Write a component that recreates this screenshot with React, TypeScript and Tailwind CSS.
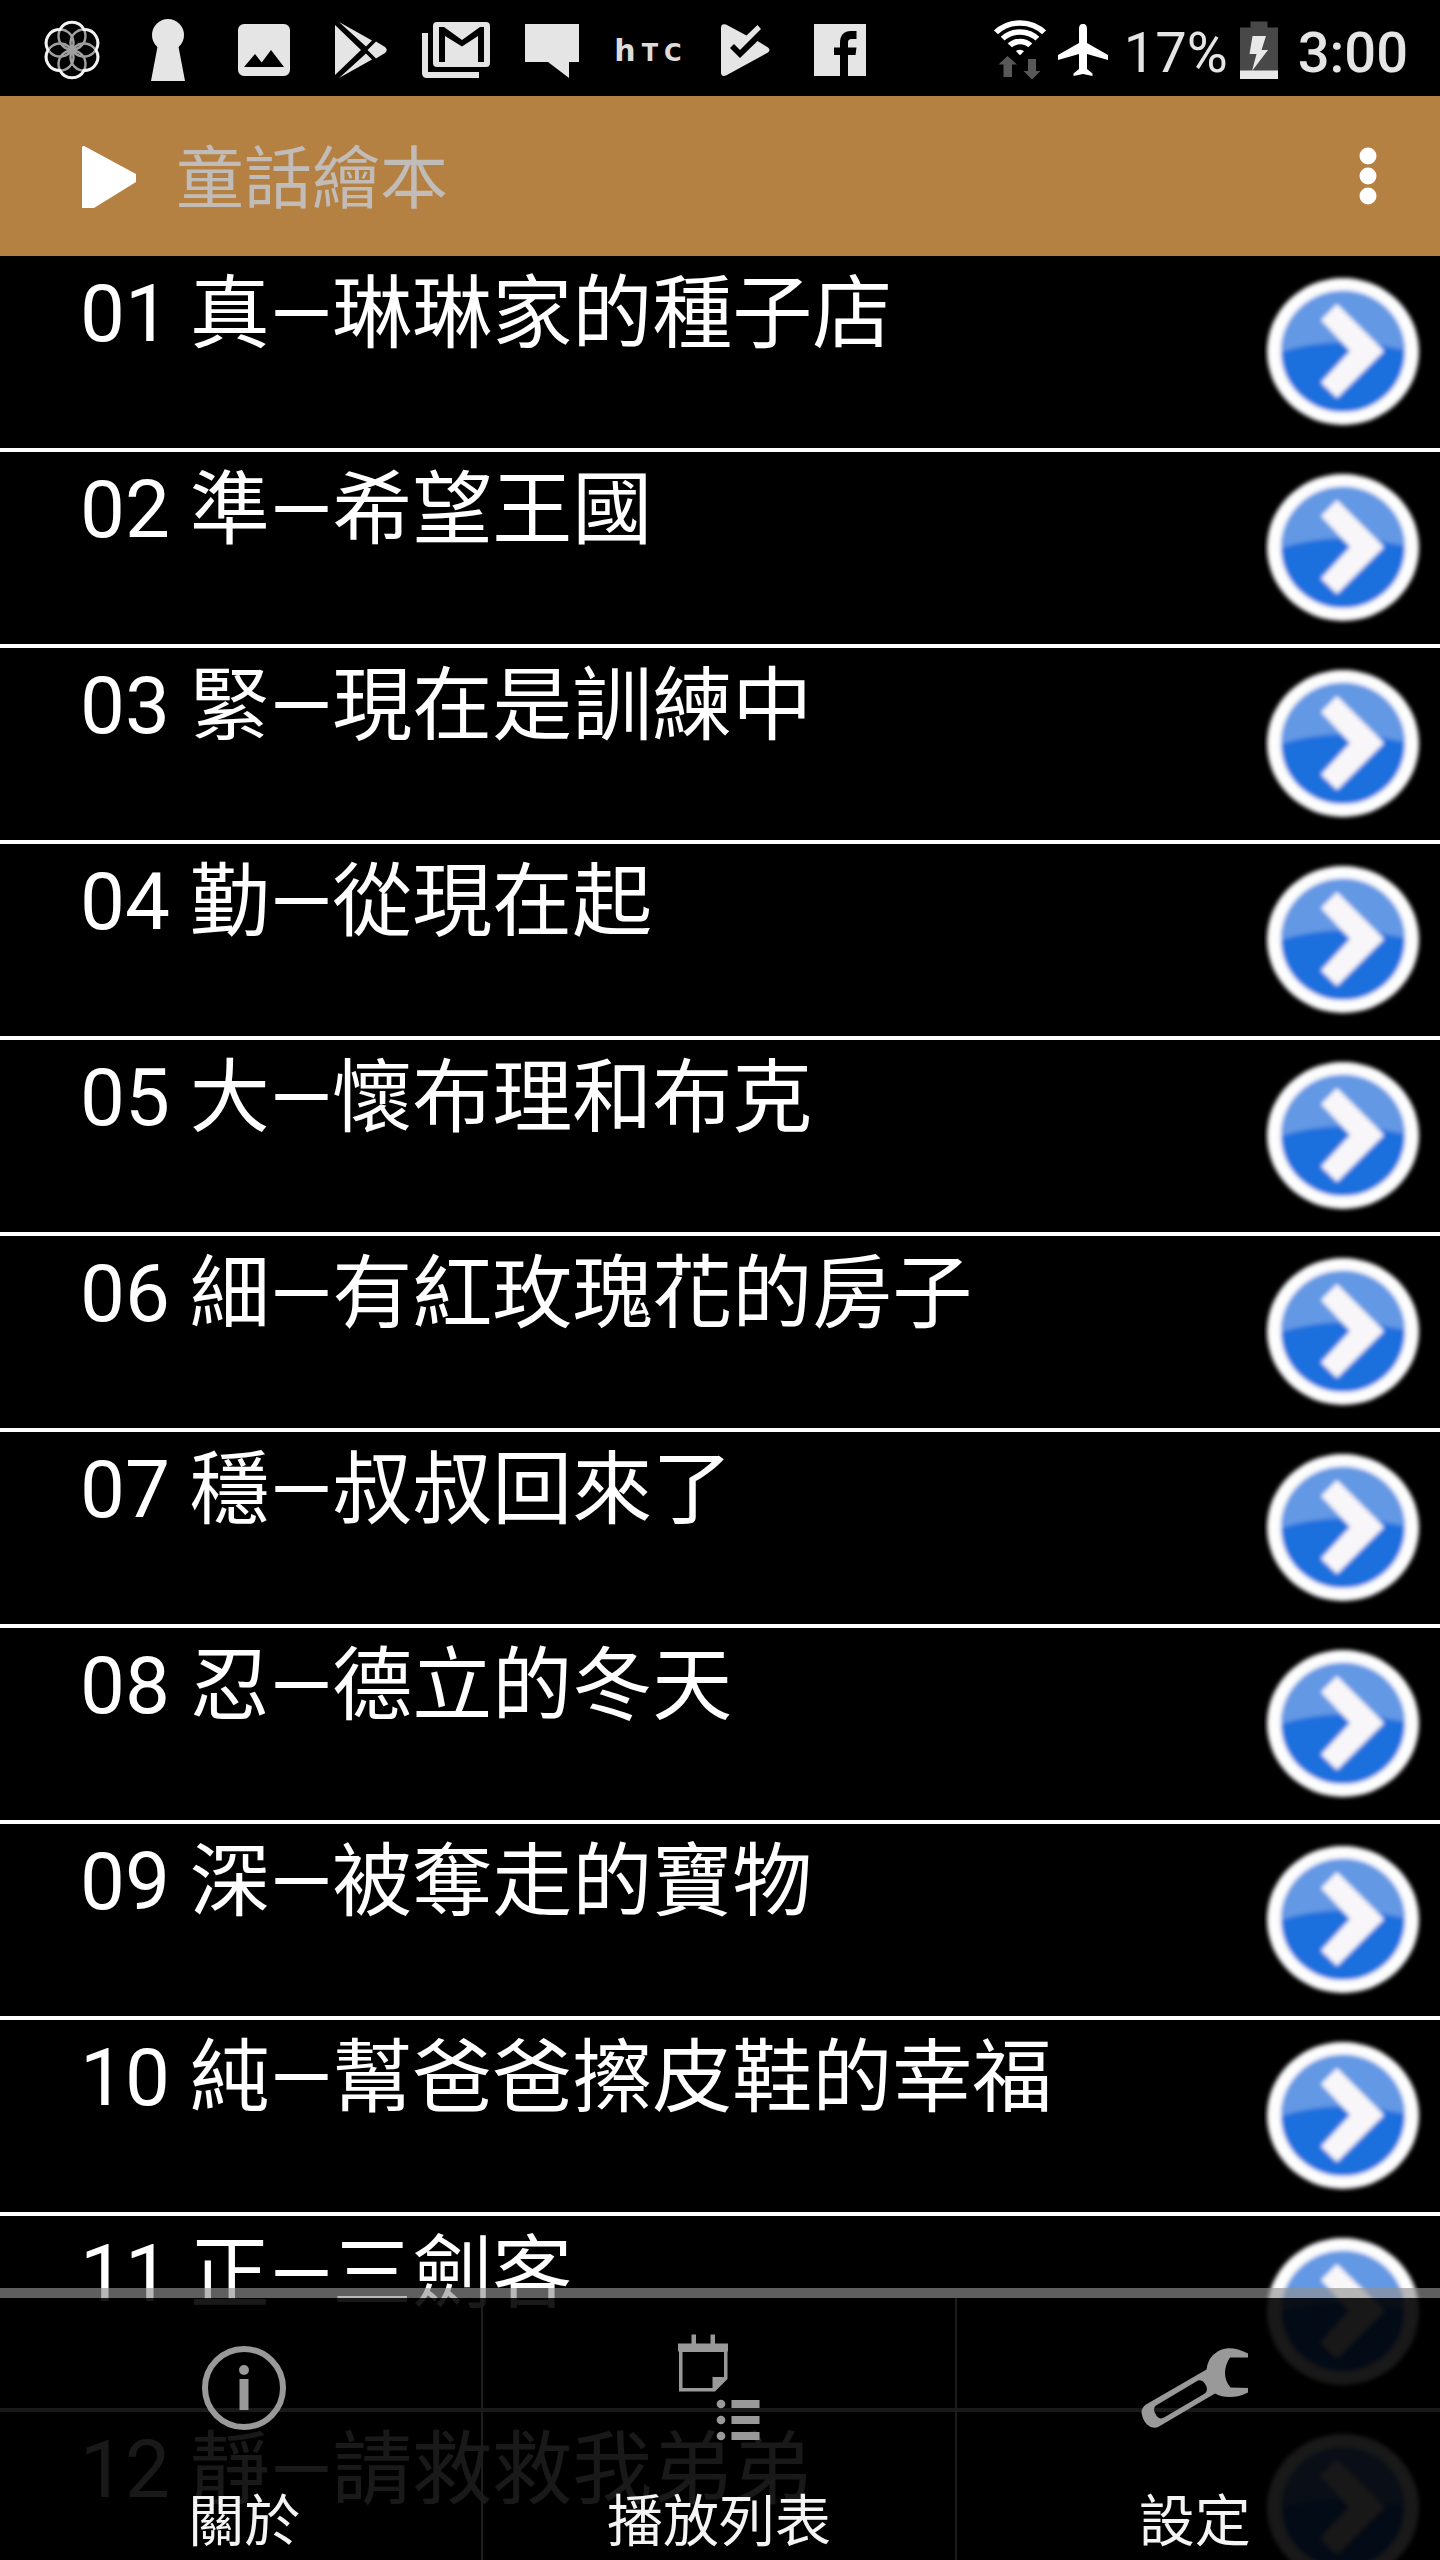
import type { ReactNode } from "react";

const stories = [
  "01 真—琳琳家的種子店",
  "02 準—希望王國",
  "03 緊—現在是訓練中",
  "04 勤—從現在起",
  "05 大—懷布理和布克",
  "06 細—有紅玫瑰花的房子",
  "07 穩—叔叔回來了",
  "08 忍—德立的冬天",
  "09 深—被奪走的寶物",
  "10 純—幫爸爸擦皮鞋的幸福",
  "11 正—三劍客",
  "12 靜—請救救我弟弟",
];

const StatusIcon = ({ children }: { children: ReactNode }) => (
  <svg className="size-24 shrink-0" viewBox="0 0 96 96" fill="#e5e5e5" aria-hidden="true">
    {children}
  </svg>
);

const petals = [
  [48, 36],
  [60, 43],
  [60, 57],
  [48, 64],
  [36, 57],
  [36, 43],
];

const StatusBar = () => (
  <div className="flex h-24 shrink-0 items-center justify-between pl-6 pr-8">
    <div className="flex items-center">
      <StatusIcon>
        <g fill="none" stroke="#a0a0a0" strokeWidth="2.4">
          {petals.map(([x, y]) => (
            <circle key={`${x}-${y}`} cx={x} cy={y} r="13.5" />
          ))}
        </g>
        <path
          d="M72 50A13.5 13.5 0 0 0 60 29.5A13.5 13.5 0 0 0 36 29.5A13.5 13.5 0 0 0 24 50A13.5 13.5 0 0 0 36 70.5A13.5 13.5 0 0 0 60 70.5A13.5 13.5 0 0 0 72 50Z"
          fill="none"
          stroke="#f4f4f4"
          strokeWidth="2.8"
        />
      </StatusIcon>
      <StatusIcon>
        <circle cx="48" cy="35" r="16" />
        <path d="M38 44h20l7 37H31z" />
      </StatusIcon>
      <StatusIcon>
        <path
          fillRule="evenodd"
          d="M28 24h40a6 6 0 0 1 6 6v40a6 6 0 0 1-6 6H28a6 6 0 0 1-6-6V30a6 6 0 0 1 6-6zM28 67h40L55 50l-9.300 12.500L39 54z"
        />
      </StatusIcon>
      <StatusIcon>
        <path d="M23 25L49 50L23 75zM27 22L60 40.500L54 46.500zM27 78L60 59.500L54 53.500zM64 41.500L73 47Q76.500 50 73 53L64 58.500L55.500 50z" />
      </StatusIcon>
      <StatusIcon>
        <path d="M14 33h6v39h51v6H19q-5 0-5-5z" />
        <path
          fillRule="evenodd"
          d="M29 22h49q4 0 4 4v37q0 4-4 4H29q-4 0-4-4V26q0-4 4-4zM31 27v35h6V36l17 10.500L70 36v26h6V27h-4L54 40L36 27z"
        />
      </StatusIcon>
      <StatusIcon>
        <path d="M21 24h54v38H65v16L44 62H21z" />
      </StatusIcon>
      <div className="flex w-24 items-baseline justify-center gap-1.5 pt-2 font-['DejaVu_Sans',sans-serif] font-bold text-[#dcdcdc]">
        <span className="text-[30px] leading-8">h</span>
        <span className="text-2xl leading-8">T</span>
        <span className="text-2xl leading-8">C</span>
      </div>
      <StatusIcon>
        <path d="M25 28q0-5 5-3.500L50.500 35.500L61.500 25L65 29L44 50L38 44L34 48L44 58L61.500 41L72 47.500q3 2.500 0 5L30 75.500q-5 1.500-5-3z" />
      </StatusIcon>
      <StatusIcon>
        <path
          fillRule="evenodd"
          d="M22 24h52v52H56V55h7.500l1-7.500H56V43c0-3 1-4 3.500-4h5v-8H59c-7 0-11 4-11 12v4.500h-6V55h6v21H22z"
        />
      </StatusIcon>
    </div>
    <div className="flex items-center text-[56px] leading-[56px] text-[#e5e5e5]">
      <svg className="mr-2 h-24 w-[60px]" viewBox="0 0 60 96" aria-label="Wi-Fi">
        <clipPath id="wifi">
          <path d="M30 55L-3 24V0H63V24z" />
        </clipPath>
        <g clipPath="url(#wifi)" fill="none" stroke="#fff" strokeWidth="5.5">
          <circle cx="30" cy="59" r="36" />
          <circle cx="30" cy="58" r="26" />
          <circle cx="30" cy="57" r="15.500" />
          <circle cx="30" cy="56" r="3.500" fill="#fff" />
        </g>
        <path
          fill="#585858"
          d="M17.500 56L27 64.500H22V77H13.500V64.500H8.500zM38 59h8v12h4.500L42 79.500L33.500 71H38z"
        />
      </svg>
      <svg className="mr-4 h-24 w-[50px]" viewBox="0 0 50 96" fill="#fff" aria-label="Airplane mode">
        <path d="M25 24c-3 0-4 2-4 5v14L0 55v5l21-6v15l-5.500 4.500V76L25 74l9.500 2v-2.500L29 69V54l21 6v-5L29 43V29c0-3-1-5-4-5z" />
      </svg>
      <span className="pt-2.5">17%</span>
      <svg className="ml-3 mr-5 h-24 w-[38px]" viewBox="0 0 38 96" aria-label="Charging">
        <path fill="#484848" d="M10.500 21.500h17v6H38V71H0V27.500h10.500z" />
        <path fill="#e8e8e8" d="M0 70.500h38v8.500H0z" />
        <path fill="#e8e8e8" d="M12.500 36H26l-4.500 14H28L12 71l4.500-17h-7z" />
      </svg>
      <span className="pt-2.5 font-medium">3:00</span>
    </div>
  </div>
);

const Header = () => (
  <header className="flex h-40 shrink-0 items-center bg-[#b58142] pl-20 pr-11">
    <svg className="mr-10 h-16 w-14" viewBox="0 0 56 64" fill="#fff" aria-hidden="true">
      <path d="M2 64V3q1-2 4 0L56 30v8L14 64z" />
    </svg>
    <h1 className="flex-1 pt-2 text-[68px] leading-[80px] text-[#c1bcb8]">童話繪本</h1>
    <button type="button" aria-label="More options" className="flex h-20 w-14 items-center justify-center">
      <svg className="h-16 w-5" viewBox="0 0 20 64" fill="#fff" aria-hidden="true">
        <circle cx="10" cy="12" r="8.500" />
        <circle cx="10" cy="32" r="8.500" />
        <circle cx="10" cy="52" r="8.500" />
      </svg>
    </button>
  </header>
);

const ArrowBadge = () => (
  <svg className="size-40 shrink-0" viewBox="0 0 160 160" aria-hidden="true">
    <g filter="url(#soften)">
      <ellipse cx="79" cy="79.500" rx="76" ry="73.500" fill="#fdfdfd" />
      <ellipse cx="79" cy="79.500" rx="62" ry="60.500" fill="#1f6fde" />
      <path d="M17 80A62 60.500 0 0 1 141 78Q126 75 110 72Q60 66 17 80z" fill="#6398e4" />
      <path d="M73 32L120 79L73 126L57 110.500L86 79L57 48z" fill="#f8f6f8" />
    </g>
  </svg>
);

const StoryRow = ({ title }: { title: string }) => (
  <li className="border-b-4 border-white">
    <a href="#story" className="flex h-48 items-center pl-20 pr-4">
      <span className="flex-1 self-start whitespace-nowrap pt-2.5 text-[80px] leading-[96px]">{title}</span>
      <ArrowBadge />
    </a>
  </li>
);

const InfoIcon = () => (
  <svg className="size-28" viewBox="0 0 112 112" fill="#999" aria-hidden="true">
    <circle cx="56" cy="56" r="39" fill="none" stroke="#999" strokeWidth="6" />
    <circle cx="56" cy="38" r="5" />
    <path d="M51.500 47h9v31h-9z" />
  </svg>
);

const PlaylistIcon = () => (
  <svg className="size-28" viewBox="0 0 112 112" fill="#999" aria-hidden="true">
    <path d="M15 11.500h13.500v-9h4.500v9h14.500v-9h4.500v9H65v8H15z" />
    <path fillRule="evenodd" d="M16 19h48.500v28L52 59.500H16zM19.500 20v36h30V45h11.500V20z" />
    {[72, 88, 104].map((y) => (
      <g key={y}>
        <circle cx="58" cy={y} r="4.300" />
        <rect x="68.500" y={y - 4} width="28" height="8" />
      </g>
    ))}
  </svg>
);

const WrenchIcon = () => (
  <svg className="size-28" viewBox="0 0 112 112" fill="#999" aria-hidden="true">
    <path
      fillRule="evenodd"
      d="M109 21.500v4H91Q86 33 86 41T91.500 55.500L109 56v4.500Q100 65 91 65T76 61.500L20 94.500Q14 98 8 92.500Q3 87 2.500 80Q3 75 7 72.500L67.500 37.500Q69 25 78 20Q90 12 109 21.500zM17 73.500Q14 76 15.500 80T20 86Q22 87 25 85.500L65 62Q69 60 67.500 54.500Q64 47 59 48.500z"
    />
  </svg>
);

const tabs = [
  { label: "關於", icon: <InfoIcon /> },
  { label: "播放列表", icon: <PlaylistIcon /> },
  { label: "設定", icon: <WrenchIcon /> },
];

const BottomMenu = () => (
  <nav className="absolute inset-x-0 bottom-0">
    <div className="h-2.5 bg-[#929292]/65" />
    <div className="grid grid-cols-3 divide-x-2 divide-[#1c1c1c] bg-black/90 px-2">
      {tabs.map(({ label, icon }) => (
        <button
          key={label}
          type="button"
          className="flex flex-col items-center gap-[46px] pb-1.5 pt-[34px] text-[56px] leading-[64px] text-[#f4f4f4]"
        >
          {icon}
          <span>{label}</span>
        </button>
      ))}
    </div>
  </nav>
);

const App = () => (
  <div
    lang="zh-Hant"
    className="relative flex h-screen flex-col overflow-hidden bg-black font-[Roboto,'Noto_Sans_CJK_TC',sans-serif] text-white"
  >
    <svg className="absolute size-0" aria-hidden="true">
      <filter id="soften">
        <feGaussianBlur stdDeviation="2" />
      </filter>
    </svg>
    <StatusBar />
    <Header />
    <ul className="min-h-0 flex-1 overflow-hidden">
      {stories.map((title) => (
        <StoryRow key={title} title={title} />
      ))}
    </ul>
    <BottomMenu />
  </div>
);

export default App;
